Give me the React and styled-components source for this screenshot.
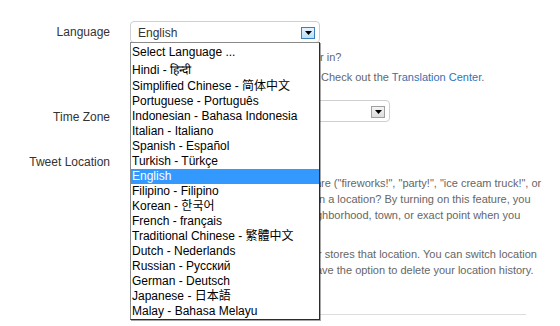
import React from "react";
import styled, { createGlobalStyle } from "styled-components";

const GlobalStyle = createGlobalStyle`
  html, body {
    margin: 0;
    padding: 0;
    background: #ffffff;
  }
  body {
    font-family: "Liberation Sans", Arial, sans-serif;
    overflow: hidden;
  }
`;

const Page = styled.div`
  width: 560px;
  height: 326px;
  padding-top: 21px;
  box-sizing: border-box;
  position: relative;
`;

const Field = styled.div`
  display: grid;
  grid-template-columns: 110px 396px;
  column-gap: 20px;
  margin-top: ${(p) => p.$top || 0}px;
`;

const Label = styled.div`
  text-align: right;
  font-size: 12px;
  color: #333333;
  line-height: ${(p) => p.$lh || 16}px;
  padding-top: ${(p) => p.$pad || 0}px;
  white-space: nowrap;
`;

const Control = styled.div`
  display: flex;
  flex-direction: column;
  min-width: 0;
`;

const SelectWrap = styled.div`
  position: relative;
  width: ${(p) => p.$w}px;
  z-index: ${(p) => (p.$open ? 10 : 1)};
`;

const SelectBox = styled.div`
  height: 22px;
  box-sizing: border-box;
  border: 1px solid #cfcfcf;
  border-radius: 4px;
  background: #ffffff;
  display: flex;
  align-items: center;
  justify-content: space-between;
  padding: 1px 4px 0 7px;
  font-size: 12px;
  color: #333333;
`;

const ArrowButton = styled.div`
  width: 14px;
  height: 12px;
  box-sizing: border-box;
  border: 1px solid ${(p) => (p.$focus ? "#3d7fba" : "#9f9f9f")};
  background: ${(p) =>
    p.$focus
      ? "linear-gradient(#e6f4fc, #b9e0f6)"
      : "linear-gradient(#f4f4f4, #dcdcdc)"};
  display: flex;
  align-items: center;
  justify-content: center;
`;

const List = styled.div`
  position: absolute;
  top: 21px;
  left: 0;
  width: 190px;
  box-sizing: border-box;
  padding-top: 1px;
  background: #ffffff;
  border: 1px solid #8a8a8a;
  border-right: 1px solid #2b2b2b;
  border-bottom: 1px solid #2b2b2b;
  box-shadow: 1px 1px 0 rgba(0, 0, 0, 0.35);
`;

const Option = styled.div`
  height: ${(p) => p.$h || 15}px;
  display: flex;
  align-items: flex-end;
  padding-left: 1px;
  font-size: 12px;
  line-height: 15px;
  white-space: nowrap;
  overflow: hidden;
  color: ${(p) => (p.$active ? "#ffffff" : "#000000")};
  background: ${(p) => (p.$active ? "#3399ff" : "transparent")};
  font-family: "Liberation Sans", Arial, "Noto Sans CJK SC", "Noto Sans CJK KR",
    "Noto Sans CJK JP", sans-serif;
`;

const OptionText = styled.span`
  display: block;
  height: 15px;
  line-height: 15px;
`;

const Help = styled.div`
  font-size: 11px;
  color: #666666;
  line-height: 16px;
  margin-top: ${(p) => p.$top || 0}px;
  white-space: nowrap;
`;

const Line = styled.span`
  display: block;
  white-space: nowrap;
`;

/* start of a line that sits under the open language list */
const Lead = styled.span`
  display: inline-block;
  vertical-align: top;
  width: ${(p) => p.$w}px;
  height: 16px;
  overflow: hidden;
  white-space: nowrap;
`;

const Link = styled.a`
  color: #2f73b6;
  text-decoration: none;
`;

const CheckRow = styled.label`
  display: flex;
  align-items: center;
  gap: 5px;
  height: 16px;
  font-size: 12px;
  color: #333333;
`;

const Rule = styled.div`
  height: 1px;
  background: #dddddd;
  margin-top: ${(p) => p.$top || 0}px;
`;

const Triangle = () => (
  <svg width="7" height="4" viewBox="0 0 7 4">
    <polygon points="0,0 7,0 3.5,4" fill="#000" />
  </svg>
);

const languages = [
  { label: "Select Language ...", h: 16 },
  { label: "Hindi - हिन्दी", h: 18 },
  { label: "Simplified Chinese - 简体中文", h: 16 },
  { label: "Portuguese - Português" },
  { label: "Indonesian - Bahasa Indonesia" },
  { label: "Italian - Italiano" },
  { label: "Spanish - Español" },
  { label: "Turkish - Türkçe" },
  { label: "English", active: true },
  { label: "Filipino - Filipino" },
  { label: "Korean - 한국어" },
  { label: "French - français" },
  { label: "Traditional Chinese - 繁體中文" },
  { label: "Dutch - Nederlands" },
  { label: "Russian - Русский" },
  { label: "German - Deutsch" },
  { label: "Japanese - 日本語" },
  { label: "Malay - Bahasa Melayu" },
];

const locationLines = [
  { lead: "Do you ever want to share where you a", w: 191, rest: 're ("fireworks!", "party!", "ice cream truck!", or' },
  { lead: 'just "home") with the Tweets you post i', w: 189, rest: "n a location? By turning on this feature, you" },
  { lead: "will be able to add details like your nei", w: 186, rest: "ghborhood, town, or exact point when you" },
  { lead: "Tweet.", w: 40, rest: "" },
];

const historyLines = [
  { lead: "When you Tweet with a location, Twitte", w: 188, rest: "r stores that location. You can switch location" },
  { lead: "on/off before each tweet and always h", w: 186, rest: "ave the option to delete your location history." },
];

const App = () => {
  return (
    <>
      <GlobalStyle />
      <Page>
        <Field>
          <Label $lh={23}>Language</Label>
          <Control>
            <SelectWrap $w={190} $open>
              <SelectBox>
                <span>English</span>
                <ArrowButton $focus>
                  <Triangle />
                </ArrowButton>
              </SelectBox>
              <List>
                {languages.map((lang) => (
                  <Option key={lang.label} $h={lang.h} $active={lang.active}>
                    <OptionText>{lang.label}</OptionText>
                  </Option>
                ))}
              </List>
            </SelectWrap>
            <Help $top={6}>
              <Lead $w={190}>What language would you prefer Twitte</Lead>r in?
            </Help>
            <Help $top={4}>
              <Lead $w={191}>Interested in helping translate Twitter?</Lead>
              Check out the <Link href="#">Translation Center</Link>.
            </Help>
          </Control>
        </Field>

        <Field $top={15}>
          <Label $pad={9}>Time Zone</Label>
          <Control>
            <SelectWrap $w={260}>
              <SelectBox>
                <span>(GMT-08:00) Pacific Time</span>
                <ArrowButton>
                  <Triangle />
                </ArrowButton>
              </SelectBox>
            </SelectWrap>
          </Control>
        </Field>

        <Field $top={29}>
          <Label>Tweet Location</Label>
          <Control>
            <CheckRow>
              <input type="checkbox" /> Add a location to my Tweets
            </CheckRow>
            <Help $top={5}>
              {locationLines.map((l) => (
                <Line key={l.lead}>
                  <Lead $w={l.w}>{l.lead}</Lead>
                  {l.rest}
                </Line>
              ))}
            </Help>
            <Help $top={7}>
              {historyLines.map((l) => (
                <Line key={l.lead}>
                  <Lead $w={l.w}>{l.lead}</Lead>
                  {l.rest}
                </Line>
              ))}
            </Help>
            <Rule $top={36} />
          </Control>
        </Field>
      </Page>
    </>
  );
};

export default App;
